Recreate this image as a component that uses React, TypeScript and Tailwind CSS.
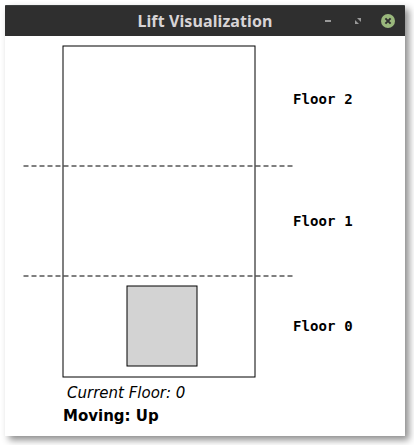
function TitleBar() {
  return (
    <header className="relative flex h-[31px] items-center justify-end rounded-t-[1px] border-t border-[#3b3f3f] bg-[#2f2f2f] pr-[10px]">
      <h1 className="absolute inset-x-0 top-0 text-center font-['Noto_Sans',sans-serif] text-[16px] leading-[30px] font-bold tracking-[0.1px] text-[#d8d4d6]">
        Lift Visualization
      </h1>
      <div className="relative flex items-center gap-[16px]">
        <svg width="14" height="14" viewBox="0 0 14 14" aria-label="Minimize">
          <path d="M4 6h6v2H4z" fill="#999" />
        </svg>
        <svg width="14" height="14" viewBox="0 0 14 14" aria-label="Maximize">
          <path d="M6 4h4v4zM4 6v4h4z" fill="#999" />
        </svg>
        <svg width="14" height="14" viewBox="0 0 14 14" aria-label="Close">
          <circle cx="7" cy="7" r="7" fill="#9ab87c" />
          <path d="M4.4 4.4l5.2 5.2M9.6 4.4l-5.2 5.2" stroke="#2f2f2f" strokeWidth="2" />
        </svg>
      </div>
    </header>
  );
}

function Shaft() {
  return (
    <svg width="280" height="344" viewBox="0 0 280 344" className="block shrink-0" fill="none" stroke="#000">
      <rect x="48" y="10" width="192" height="331" />
      <g strokeDasharray="4 4" strokeLinecap="square">
        <path d="M9 130H278" />
        <path d="M9 240H278" />
      </g>
      <rect x="112" y="250" width="70" height="80" fill="#d3d3d3" />
    </svg>
  );
}

export default function App() {
  return (
    <div className="h-[445px] w-[414px] overflow-hidden bg-white pt-[5px] pl-[5px]">
      <main className="h-[431px] w-[400px] bg-white font-['DejaVu_Sans',sans-serif] text-black shadow-[4px_4px_7px_rgba(0,0,0,0.45)]">
        <TitleBar />
        <div className="flex pl-[10px]">
          <Shaft />
          <div className="-ml-[2px] flex flex-col font-['DejaVu_Sans_Mono',monospace] text-[14px] leading-[20px] font-bold tracking-[0.1px]">
            <span className="mt-[53px]">Floor 2</span>
            <span className="mt-[102px]">Floor 1</span>
            <span className="mt-[85px]">Floor 0</span>
          </div>
        </div>
        <div className="pt-[2px] pl-[58px] text-[15px] leading-[23px]">
          <p className="pl-[4px] italic">Current Floor: 0</p>
          <p className="font-bold">Moving: Up</p>
        </div>
      </main>
    </div>
  );
}
